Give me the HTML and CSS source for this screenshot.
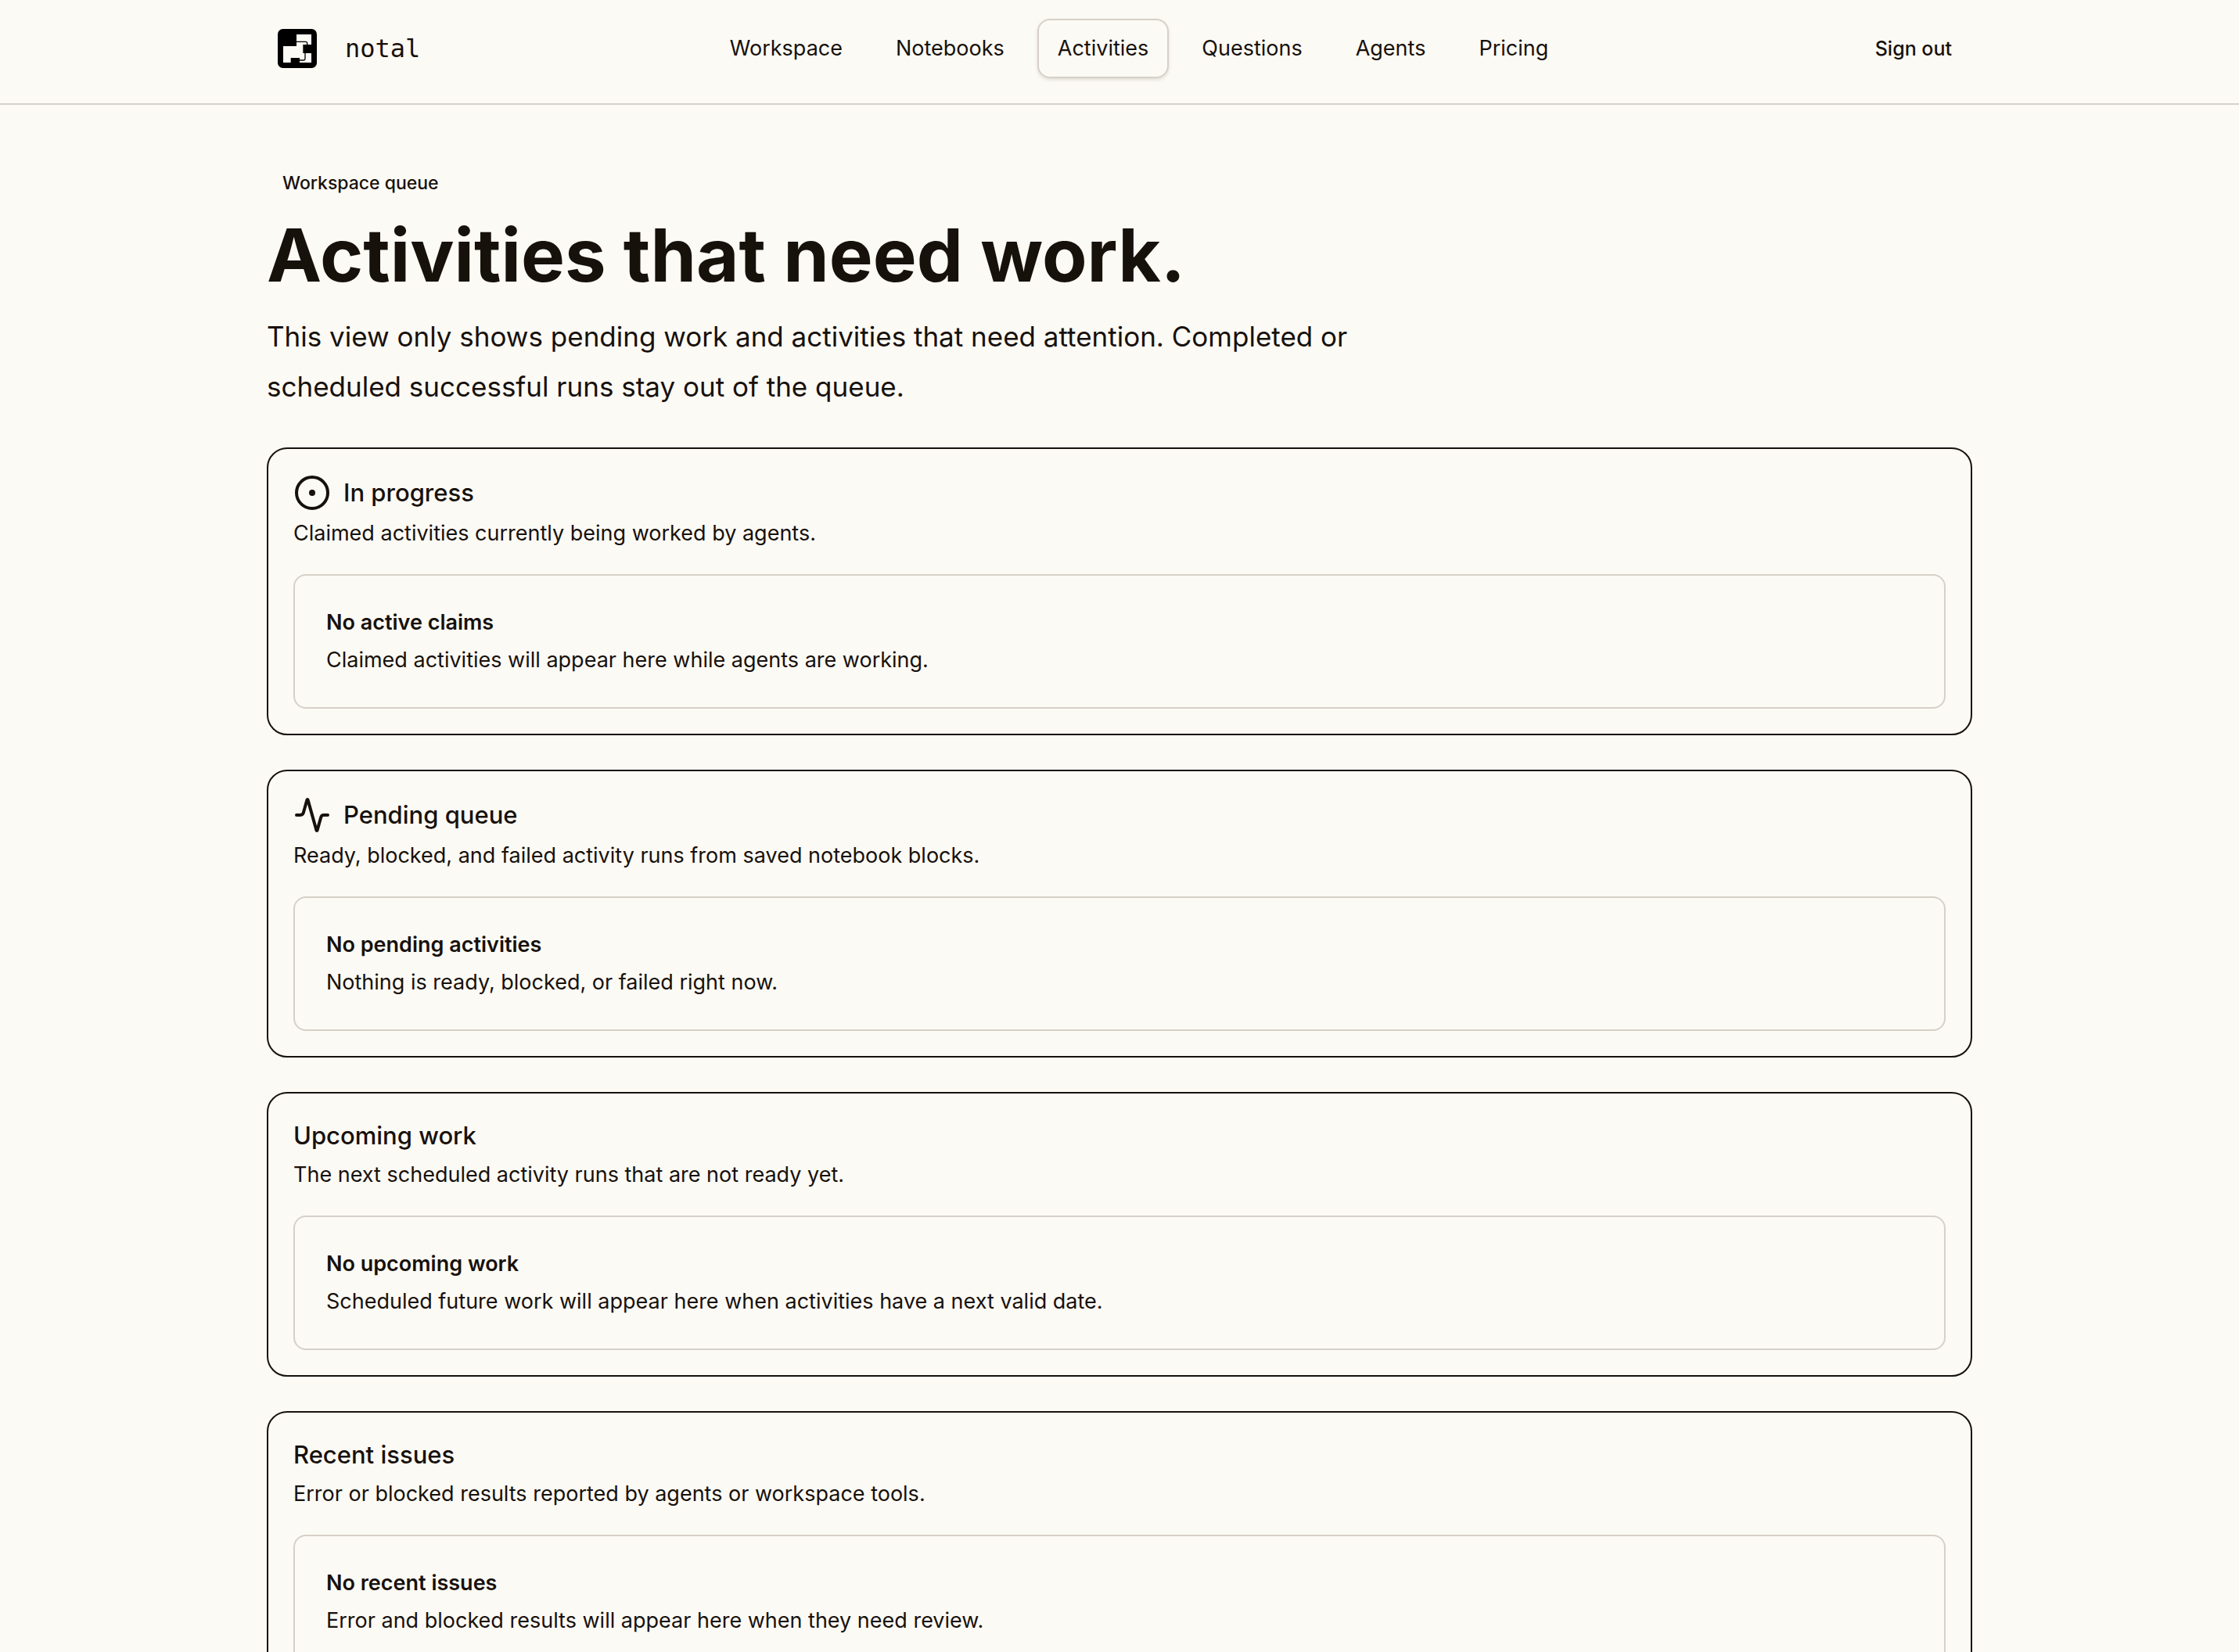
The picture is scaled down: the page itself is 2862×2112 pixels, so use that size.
FILE: index.html
```
<!DOCTYPE html>
<html lang="en">
<head>
    <meta charset="UTF-8">
    <meta name="viewport" content="width=device-width, initial-scale=1.0">
    <title>Activities - notal</title>
    <link rel="stylesheet" href="styles.css">
</head>
<body>
    <header class="site-header">
        <div class="container header-inner">
            <a href="#" class="brand">
                <svg class="brand-logo" viewBox="0 0 150 150" aria-hidden="true">
                    <rect width="150" height="150" rx="20"/>
                    <path fill="#fcfaf5" d="M72 21h57v39H97v33h32v36H84v-18H50v18H21V66h51z"/>
                    <path fill="none" stroke="#000" stroke-width="4" d="M72 49h35q6 0 6 6v6M105 93v22q0 5-5 5H84"/>
                </svg>
                <span class="brand-name">notal</span>
            </a>
            <nav class="main-nav">
                <a href="#">Workspace</a>
                <a href="#">Notebooks</a>
                <a href="#" class="active" aria-current="page">Activities</a>
                <a href="#">Questions</a>
                <a href="#">Agents</a>
                <a href="#">Pricing</a>
            </nav>
            <button type="button" class="sign-out">Sign out</button>
        </div>
    </header>

    <main class="container page">
        <section class="intro">
            <span class="badge">Workspace queue</span>
            <h1>Activities that need work.</h1>
            <p class="lead">This view only shows pending work and activities that need attention. Completed or scheduled successful runs stay out of the queue.</p>
        </section>

        <div class="cards">
            <section class="card">
                <h2 class="card-title">
                    <svg class="icon" viewBox="0 0 24 24" aria-hidden="true">
                        <circle cx="12" cy="12" r="10"/>
                        <circle cx="12" cy="12" r="1"/>
                    </svg>
                    In progress
                </h2>
                <p class="card-text">Claimed activities currently being worked by agents.</p>
                <div class="empty">
                    <h3>No active claims</h3>
                    <p>Claimed activities will appear here while agents are working.</p>
                </div>
            </section>

            <section class="card">
                <h2 class="card-title">
                    <svg class="icon" viewBox="0 0 24 24" aria-hidden="true">
                        <path d="M22 12h-2.48a2 2 0 0 0-1.93 1.46l-2.35 8.36a.25.25 0 0 1-.48 0L9.24 2.18a.25.25 0 0 0-.48 0l-2.35 8.36A2 2 0 0 1 4.49 12H2"/>
                    </svg>
                    Pending queue
                </h2>
                <p class="card-text">Ready, blocked, and failed activity runs from saved notebook blocks.</p>
                <div class="empty">
                    <h3>No pending activities</h3>
                    <p>Nothing is ready, blocked, or failed right now.</p>
                </div>
            </section>

            <section class="card">
                <h2 class="card-title">Upcoming work</h2>
                <p class="card-text">The next scheduled activity runs that are not ready yet.</p>
                <div class="empty">
                    <h3>No upcoming work</h3>
                    <p>Scheduled future work will appear here when activities have a next valid date.</p>
                </div>
            </section>

            <section class="card">
                <h2 class="card-title">Recent issues</h2>
                <p class="card-text">Error or blocked results reported by agents or workspace tools.</p>
                <div class="empty">
                    <h3>No recent issues</h3>
                    <p>Error and blocked results will appear here when they need review.</p>
                </div>
            </section>
        </div>
    </main>
</body>
</html>
```
FILE: styles.css
```
* {
    box-sizing: border-box;
}
body {
    margin: 0;
    background: #fcfaf5;
    color: #17110c;
    font-family: 'Inter', sans-serif;
    font-size: 27px;
    line-height: 48px;
}
h1, h2, h3, p {
    margin: 0;
}
a {
    color: inherit;
    text-decoration: none;
}
.container {
    width: 100%;
    max-width: 2180px;
    margin: 0 auto;
}

/* header */
.site-header {
    padding: 24px 0 32px;
    border-bottom: 2px solid #d6d0c8;
}
.header-inner {
    display: flex;
    justify-content: space-between;
    align-items: center;
}
.brand {
    display: flex;
    align-items: center;
    gap: 36px;
    padding: 0 4px 0 14px;
}
.brand-logo {
    width: 50px;
    height: 50px;
}
.brand-name {
    font-family: 'DejaVu Sans Mono', monospace;
    font-size: 32px;
}
.main-nav {
    display: flex;
    gap: 16px;
}
.main-nav a, .sign-out {
    padding: 12px 24px;
    border: 2px solid transparent;
    border-radius: 16px;
}
.main-nav a.active {
    border-color: #d6d0c8;
    box-shadow: 0 2px 4px rgba(23, 17, 12, 0.12);
}
.sign-out {
    background: none;
    color: inherit;
    font-family: inherit;
    font-size: 25px;
    font-weight: 500;
    line-height: 48px;
    cursor: pointer;
}

/* intro */
.page {
    padding: 80px 0;
}
.intro {
    display: flex;
    flex-direction: column;
    align-items: flex-start;
    gap: 24px;
    margin-bottom: 46px;
}
.badge {
    padding: 0 20px;
    font-size: 23px;
    font-weight: 500;
    line-height: 40px;
}
h1 {
    font-size: 94px;
    font-weight: 700;
    line-height: 96px;
}
.lead {
    max-width: 1400px;
    font-size: 35px;
    line-height: 64px;
}

/* cards */
.cards {
    display: flex;
    flex-direction: column;
    gap: 44px;
}
.card {
    padding: 32px;
    border: 2px solid #17110c;
    border-radius: 26px;
}
.card-title {
    display: flex;
    align-items: center;
    gap: 16px;
    font-size: 31px;
    font-weight: 500;
    line-height: 44px;
}
.icon {
    width: 48px;
    height: 48px;
    fill: none;
    stroke: currentColor;
    stroke-width: 2;
    stroke-linecap: round;
    stroke-linejoin: round;
}
.card-text {
    margin: 4px 0 28px;
}
.empty {
    padding: 36px 40px;
    border: 2px solid #d6d0c8;
    border-radius: 16px;
}
.empty h3 {
    font-size: 27px;
    font-weight: 600;
}
```
